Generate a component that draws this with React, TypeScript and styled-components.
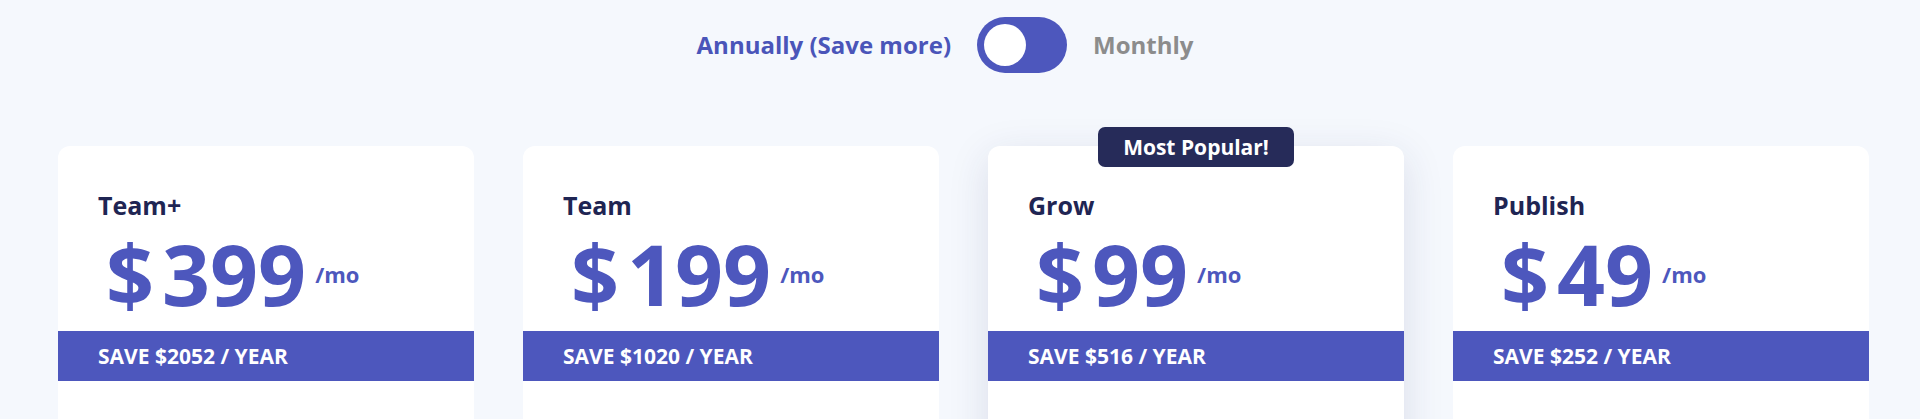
import styled, { createGlobalStyle } from 'styled-components';

const GlobalStyle = createGlobalStyle`
    * {
        box-sizing: border-box;
    }

    html, body {
        margin: 0;
        padding: 0;
        overflow: hidden;
        background: #f5f8fd;
        font-family: "Open Sans", "Liberation Sans", sans-serif;
    }
`;

interface Plan {
    name: string;
    price: number;
    savings: number;
    popular?: boolean;
}

const plans: Plan[] = [
    { name: 'Team+', price: 399, savings: 2052 },
    { name: 'Team', price: 199, savings: 1020 },
    { name: 'Grow', price: 99, savings: 516, popular: true },
    { name: 'Publish', price: 49, savings: 252 },
];

export default function App() {
    return (
        <>
            <GlobalStyle />
            <Page>
                <BillingSwitch>
                    <BillingLabel $active>Annually (Save more)</BillingLabel>
                    <Toggle role="switch" aria-checked="true" aria-label="Billing period">
                        <Knob />
                    </Toggle>
                    <BillingLabel>Monthly</BillingLabel>
                </BillingSwitch>

                <PlanGrid>
                    {plans.map((plan) => (
                        <PlanCard key={plan.name} $popular={plan.popular}>
                            {plan.popular && <PopularBadge>Most Popular!</PopularBadge>}
                            <PlanName>{plan.name}</PlanName>
                            <PriceRow>
                                <Currency>$</Currency>
                                <Amount>{plan.price}</Amount>
                                <Per>/mo</Per>
                            </PriceRow>
                            <SaveBand>SAVE ${plan.savings} / YEAR</SaveBand>
                        </PlanCard>
                    ))}
                </PlanGrid>
            </Page>
        </>
    );
}

const Page = styled.div`
    height: 419px;
    overflow: hidden;
    background: #f5f8fd;
    display: flex;
    flex-direction: column;
`;

const BillingSwitch = styled.div`
    display: flex;
    align-items: center;
    justify-content: center;
    gap: 26px;
    padding: 17px 30px 0 0;
`;

const BillingLabel = styled.span<{ $active?: boolean }>`
    font-size: 24px;
    font-weight: 700;
    line-height: 1;
    color: ${props => props.$active ? '#4a55b9' : '#8c8c8c'};
`;

const Toggle = styled.div`
    width: 90px;
    height: 56px;
    border-radius: 28px;
    background: #4d57bd;
    padding: 7px;
    display: flex;
    align-items: center;
    cursor: pointer;
`;

const Knob = styled.span`
    width: 42px;
    height: 42px;
    border-radius: 50%;
    background: #fff;
`;

const PlanGrid = styled.div`
    display: grid;
    grid-template-columns: repeat(4, 416px);
    gap: 49px;
    padding: 0 51px 0 58px;
    margin-top: 73px;
`;

const PlanCard = styled.div<{ $popular?: boolean }>`
    position: relative;
    height: 340px;
    background: #fff;
    border-radius: 12px;
    padding-top: 43px;
    display: flex;
    flex-direction: column;

    ${props => props.$popular && `
        box-shadow: 0 10px 40px rgba(40, 50, 100, 0.13);
    `}
`;

const PopularBadge = styled.div`
    position: absolute;
    top: -19px;
    left: 50%;
    transform: translateX(-50%);
    width: 196px;
    height: 40px;
    border-radius: 7px;
    background: #262b59;
    color: #fff;
    font-size: 21px;
    font-weight: 700;
    display: flex;
    align-items: center;
    justify-content: center;
`;

const PlanName = styled.h3`
    margin: 0;
    padding-left: 40px;
    font-size: 25px;
    line-height: 32px;
    font-weight: 700;
    color: #1f2553;
`;

const PriceRow = styled.div`
    display: flex;
    align-items: flex-start;
    padding-left: 48px;
    margin-top: 11px;
    color: #4d57bd;
    font-weight: 700;
`;

const Currency = styled.span`
    font-size: 84px;
    line-height: 84px;
    margin-right: 8px;
`;

const Amount = styled.span`
    font-size: 84px;
    line-height: 84px;
`;

const Per = styled.span`
    font-size: 22px;
    line-height: 22px;
    margin: 31px 0 0 9px;
`;

const SaveBand = styled.div`
    margin-top: 15px;
    height: 50px;
    padding-left: 40px;
    display: flex;
    align-items: center;
    background: #4d57bd;
    color: #fff;
    font-size: 21px;
    font-weight: 700;
`;
